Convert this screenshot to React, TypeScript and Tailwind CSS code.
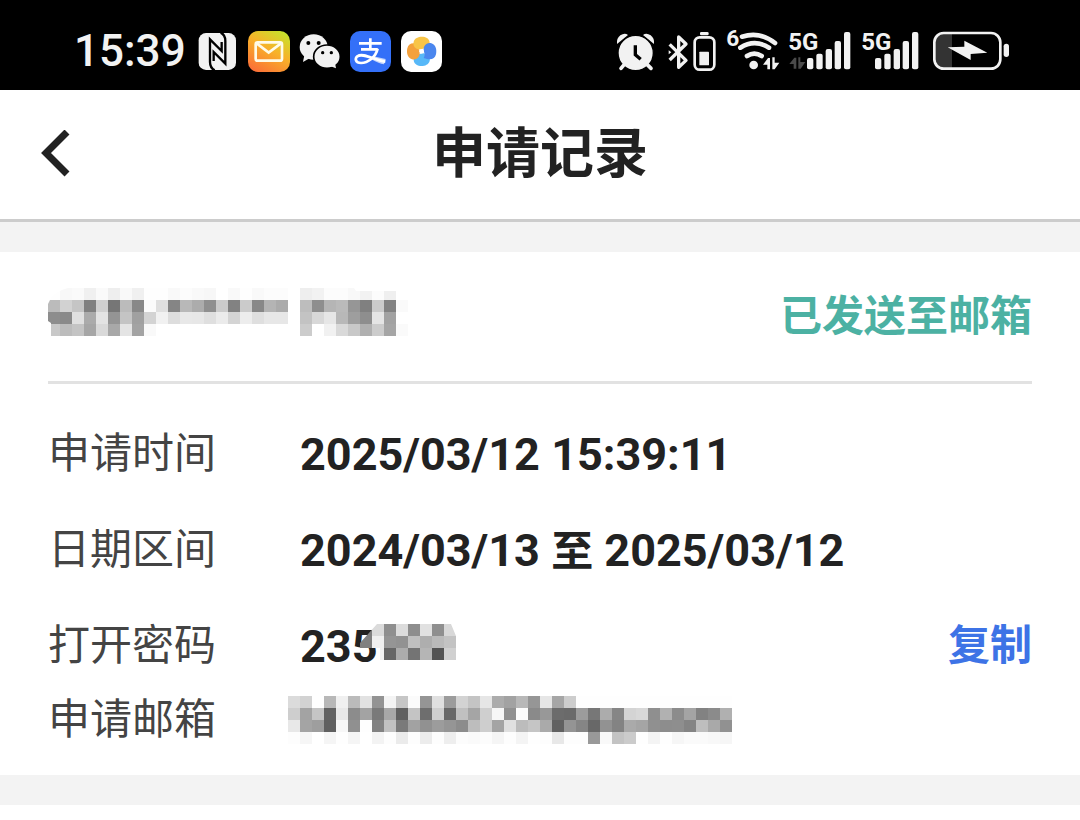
import { ReactNode } from 'react';

type IconProps = {
  viewBox: string;
  className: string;
  label: string;
  children: ReactNode;
};

type MosaicProps = {
  rows: string[];
  className: string;
  label: string;
  clip?: string;
};

const CELL = 12;

// two hex digits per cell, each one is a gray level
const cardRows = [
  'fef8faf0faeef9f0fefef9fcf9f7fff9fef9fcfcffeef2fcfcf8f2fceffe',
  'bbd2c580d076bb88fbdf85b8ac8fcb82cb88b4abffbd8eb5ba9680cb82fa',
  '8d8ae0abe394c4a0d3f1dde8e7dfebd4eddfe7e7ffc3d8e6b89e8ee5a2ff',
  'c8bcc4a6d9a8e4a3f9ffffffffffffffffffffffffccfff1d9c8b0cca5fa',
];

const passwordRows = ['80db8fdc8ee18fd8', '80f09592c0aebac3', '80f066ac74b553d0'];

const emailRows = [
  'dbd2ffb8f0bbe293f4c6fb95e09cd3c4e6aca2b896e6a6cdfefefefefefefefefefefefefe',
  'cea3c562e88ca37aa860c46ecf68c0a5cff791fc8a986c6a9c77ac86d4d88fb18ca4828bb0',
  'e8a49e60f790fe82c17aa2919c958cbdcea4e0bcc5aa619485689283aaa5908d8e84bea991',
  'fdf6fff5fef5fff3fdebfdecfdeefcfafcf5fdf4fefde8fdfd99f9c3cbfef4fef6fafaf8f6',
];

const PETAL = 'M545 88C529 90 517 80 521 65C525 51 542 48 554 51C569 55 573 67 565 88Q555 82 545 88Z';

const petals = [
  { color: '#57b8f8', angle: 180 },
  { color: '#f4a13c', angle: 270 },
  { color: '#f8c548', angle: 0 },
  { color: '#4a86ee', angle: 90 },
];

function Mosaic({ rows, className, label, clip }: MosaicProps) {
  const cols = rows[0].length / 2;

  return (
    <svg
      role="img"
      aria-label={label}
      className={className}
      width={cols * CELL}
      height={rows.length * CELL}
      shapeRendering="crispEdges"
    >
      {clip && (
        <clipPath id={`clip-${cols}`}>
          <path d={clip} />
        </clipPath>
      )}
      <g clipPath={clip ? `url(#clip-${cols})` : undefined}>
        {rows.map((row, y) =>
          row.match(/../g)!.map((gray, x) => (
            <rect
              key={`${x}-${y}`}
              x={x * CELL}
              y={y * CELL}
              width={CELL}
              height={CELL}
              fill={`#${gray}${gray}${gray}`}
            />
          ))
        )}
      </g>
    </svg>
  );
}

function StatusIcon({ viewBox, className, label, children }: IconProps) {
  return (
    <svg
      role="img"
      aria-label={label}
      viewBox={viewBox}
      className={`h-[42px] shrink-0 overflow-visible ${className}`}
      fill="#f2f2f2"
    >
      {children}
    </svg>
  );
}

function AppIcons() {
  return (
    <>
      <StatusIcon viewBox="411 30 126 126" className="w-[42px]" label="NFC">
        <rect x="416" y="39" width="112" height="111" rx="22" />
        <g fill="none" stroke="#000" strokeWidth="7">
          <path d="M464 151Q450 144 450 126V58L485 93V66" />
          <path d="M482 38Q496 45 496 63V131L461 96V123" />
        </g>
      </StatusIcon>
      <StatusIcon viewBox="24 30 126 126" className="w-[42px]" label="邮件">
        <defs>
          <linearGradient id="mail" x1="0.2" y1="1" x2="0.8" y2="0">
            <stop offset="0" stopColor="#fb7037" />
            <stop offset="0.55" stopColor="#f8b129" />
            <stop offset="1" stopColor="#c7e22c" />
          </linearGradient>
        </defs>
        <rect x="24" y="33" width="126" height="123" rx="30" fill="url(#mail)" />
        <rect x="47" y="67" width="79" height="55" rx="6" fill="none" stroke="#fffbe8" strokeWidth="8" />
        <path d="M50 70L86 98L123 70" fill="none" stroke="#fffbe8" strokeWidth="8" />
      </StatusIcon>
      <StatusIcon viewBox="177 30 126 126" className="w-[42px]" label="微信">
        <ellipse cx="221" cy="81" rx="42" ry="38" />
        <path d="M193 106L189 126L210 114Z" />
        <circle cx="205" cy="69" r="6" fill="#000" />
        <circle cx="236" cy="69" r="6" fill="#000" />
        <ellipse cx="261" cy="110" rx="40" ry="35" stroke="#000" strokeWidth="5" />
        <path d="M270 138L288 145L285 130Z" />
        <circle cx="248" cy="98" r="5" fill="#000" />
        <circle cx="274" cy="98" r="5" fill="#000" />
      </StatusIcon>
      <StatusIcon viewBox="330 30 126 126" className="w-[42px]" label="支付宝">
        <rect x="330" y="33" width="123" height="123" rx="30" fill="#3470f8" />
        <path d="M357 70H425M391 55V88M363 88H413" fill="none" stroke="#fff" strokeWidth="8" />
        <path
          d="M413 86C407 112 384 129 363 129C346 129 344 116 352 109C369 97 400 119 436 125"
          fill="none"
          stroke="#fff"
          strokeWidth="8"
        />
        <path d="M397 108L437 117L432 133Q416 130 391 116Z" fill="#fff" opacity="0.7" />
      </StatusIcon>
      <StatusIcon viewBox="483 30 126 126" className="w-[42px]" label="浏览器">
        <rect x="483" y="33" width="123" height="123" rx="30" fill="#fff" />
        {petals.map((petal) => (
          <path key={petal.angle} d={PETAL} fill={petal.color} transform={`rotate(${petal.angle} 545 94)`} />
        ))}
        <circle cx="545" cy="94" r="7" fill="#fff" />
      </StatusIcon>
    </>
  );
}

function SystemIcons() {
  return (
    <div className="flex items-center">
      <StatusIcon viewBox="48 30 117 126" className="w-[39px]" label="闹钟">
        <path d="M51 72Q49 55 61 46Q74 37 84 45Z" />
        <path d="M162 72Q164 55 152 46Q139 37 129 45Z" />
        <circle cx="107" cy="99" r="53" stroke="#000" strokeWidth="4" />
        <path d="M73 133L63 145M141 133L153 145" stroke="#f2f2f2" strokeWidth="11" strokeLinecap="round" />
        <path d="M106 76V104L122 118" fill="none" stroke="#000" strokeWidth="10" />
      </StatusIcon>
      <StatusIcon viewBox="201 30 150 126" className="ml-3 w-[50px]" label="蓝牙">
        <path
          d="M209 73L258 121L236 142V51L258 72L209 120"
          fill="none"
          stroke="#f2f2f2"
          strokeWidth="10"
          strokeLinejoin="round"
        />
        <path d="M206 91L214 97L206 103Z" />
        <rect x="284" y="52" width="59" height="97" rx="15" fill="none" stroke="#f2f2f2" strokeWidth="8" />
        <rect x="300" y="36" width="26" height="10" rx="4" />
        <rect x="298" y="95" width="29" height="41" rx="2" />
      </StatusIcon>
      <StatusIcon viewBox="378 30 162 126" className="ml-[9px] w-[54px]" label="无线网络">
        <text x="379" y="79" className="font-['Roboto',sans-serif] text-[68px] font-bold">
          6
        </text>
        <path
          d="M426 50Q480 33 525 69M421 83Q464 56 507 83M441 108Q463 94 485 108"
          fill="none"
          stroke="#f2f2f2"
          strokeWidth="14"
          strokeLinecap="round"
        />
        <circle cx="461" cy="135" r="13" />
        <path d="M489 134L504 114H510V148H502V134ZM517 112H524V128H538L524 148H517Z" />
      </StatusIcon>
      <StatusIcon viewBox="24 30 192 126" className="ml-2 w-16" label="5G 信号">
        <text x="25" y="90" className="font-['Roboto',sans-serif] text-[72px] font-bold">
          5G
        </text>
        <path d="M28 132L43 113H49V146H41V132ZM55 112H61V126H76L62 146H55Z" fill="#4a4a4a" />
        <rect x="81" y="114" width="19" height="34" rx="6" />
        <rect x="109" y="101" width="19" height="47" rx="6" />
        <rect x="137" y="87" width="19" height="61" rx="6" />
        <rect x="164" y="63" width="19" height="85" rx="6" />
        <rect x="192" y="36" width="19" height="112" rx="6" />
      </StatusIcon>
      <StatusIcon viewBox="243 30 174 126" className="ml-[9px] w-[58px]" label="5G 信号">
        <text x="244" y="90" className="font-['Roboto',sans-serif] text-[72px] font-bold">
          5G
        </text>
        <rect x="285" y="114" width="19" height="34" rx="6" />
        <rect x="313" y="101" width="19" height="47" rx="6" />
        <rect x="341" y="87" width="19" height="61" rx="6" />
        <rect x="368" y="63" width="19" height="85" rx="6" />
        <rect x="396" y="36" width="19" height="112" rx="6" />
      </StatusIcon>
      <StatusIcon viewBox="459 30 231 126" className="ml-[14px] w-[77px]" label="正在充电">
        <path d="M516 40V144H488Q464 144 464 120V64Q464 40 488 40Z" fill="#333" />
        <rect x="463" y="39" width="198" height="107" rx="28" fill="none" stroke="#f2f2f2" strokeWidth="8" />
        <path d="M503 82L553 80V62L622 98L572 102V120Z" />
        <rect x="671" y="71" width="16" height="40" rx="8" />
      </StatusIcon>
    </div>
  );
}

function Row({ label, children }: { label: string; children: ReactNode }) {
  return (
    <div className="flex h-24 items-center">
      <dt className="w-60 shrink-0">{label}</dt>
      <dd className="flex flex-1 items-center justify-between pl-3 font-bold text-[#222]">{children}</dd>
    </div>
  );
}

export default function App() {
  return (
    <div className="min-h-screen bg-white font-['Roboto','Noto_Sans_CJK_SC',sans-serif] text-[#222]">
      <div className="flex h-[90px] items-center justify-between bg-black pt-3 pr-[70px] pl-[74px]">
        <div className="flex items-center gap-[9px]">
          <time className="w-[114px] text-[44px] leading-none font-medium text-[#f2f2f2]">15:39</time>
          <AppIcons />
        </div>
        <SystemIcons />
      </div>

      <header className="grid h-[132px] grid-cols-[1fr_auto_1fr] items-center border-b-3 border-[#cccccc]">
        <button type="button" aria-label="返回" className="ml-10 w-8">
          <svg viewBox="0 0 32 50" className="h-[50px] w-8" fill="none" stroke="#222" strokeWidth="7">
            <path d="M27 2L6 23L27 44" />
          </svg>
        </button>
        <h1 className="text-[54px] leading-none font-bold">申请记录</h1>
      </header>

      <main className="bg-[#f3f3f3] py-[30px] text-[42px] leading-none">
        <section className="bg-white px-12 pb-[29px]">
          <div className="flex h-33 items-start justify-between border-b-3 border-[#e2e2e2] pt-9">
            <Mosaic
              rows={cardRows}
              label="卡号"
              className="block"
              clip="M14 2Q4 6 2 12L0 16V33L3 35V48H360V12H348V3H308L306 0H20Z"
            />
            <span className="pt-2 font-bold text-[#4cb1a3]">已发送至邮箱</span>
          </div>

          <dl className="pt-[22px] text-[#444]">
            <Row label="申请时间">
              <span className="text-[45px]">2025/03/12 15:39:11</span>
            </Row>
            <Row label="日期区间">
              <span className="text-[45px]">
                2024/03/13 <span className="text-[42px]">至</span> 2025/03/12
              </span>
            </Row>
            <Row label="打开密码">
              <span className="relative text-[45px]">
                235
                <Mosaic
                  rows={passwordRows}
                  label="已隐藏"
                  className="absolute top-0 left-15 max-w-none"
                  clip="M17 0H91L96 12V36H20V24H0V19Z"
                />
              </span>
              <button type="button" className="text-[#3d73e6]">复制</button>
            </Row>
            <div className="flex h-13 items-center">
              <dt className="w-60 shrink-0">申请邮箱</dt>
              <dd>
                <Mosaic rows={emailRows} label="邮箱" className="block" />
              </dd>
            </div>
          </dl>
        </section>
      </main>
    </div>
  );
}
